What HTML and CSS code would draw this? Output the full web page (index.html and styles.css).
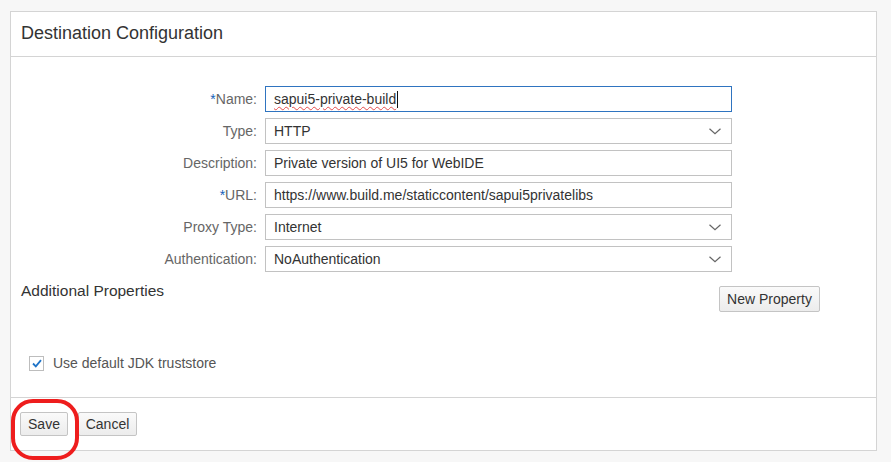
FILE: index.html
```html
<!DOCTYPE html>
<html>
<head>
<meta charset="utf-8">
<link rel="stylesheet" href="styles.css">
</head>
<body>
<div class="panel">
  <div class="panel-header">Destination Configuration</div>
  <div class="panel-body">
    <div class="form">
      <label class="lbl"><span class="req">*</span>Name:</label>
      <div class="field focused"><span class="spell">sapui5-private-build</span><span class="caret"></span></div>

      <label class="lbl">Type:</label>
      <div class="field select"><span>HTTP</span>
        <svg class="chev" width="12" height="7" viewBox="0 0 12 7"><polyline points="0.5,0.8 6,5.8 11.5,0.8" fill="none" stroke="#666" stroke-width="1.2"/></svg>
      </div>

      <label class="lbl">Description:</label>
      <div class="field"><span>Private version of UI5 for WebIDE</span></div>

      <label class="lbl"><span class="req">*</span>URL:</label>
      <div class="field"><span>https://www.build.me/staticcontent/sapui5privatelibs</span></div>

      <label class="lbl">Proxy Type:</label>
      <div class="field select"><span>Internet</span>
        <svg class="chev" width="12" height="7" viewBox="0 0 12 7"><polyline points="0.5,0.8 6,5.8 11.5,0.8" fill="none" stroke="#666" stroke-width="1.2"/></svg>
      </div>

      <label class="lbl">Authentication:</label>
      <div class="field select"><span>NoAuthentication</span>
        <svg class="chev" width="12" height="7" viewBox="0 0 12 7"><polyline points="0.5,0.8 6,5.8 11.5,0.8" fill="none" stroke="#666" stroke-width="1.2"/></svg>
      </div>
    </div>

    <div class="additional">
      <div class="add-title">Additional Properties</div>
      <button class="btn btn-new">New Property</button>
    </div>

    <div class="check-row">
      <span class="checkbox">
        <svg width="10" height="9" viewBox="0 0 10 9"><polyline points="1,4.5 3.8,7.3 9,1.2" fill="none" stroke="#1f74c8" stroke-width="1.8"/></svg>
      </span>
      <span class="check-label">Use default JDK truststore</span>
    </div>
  </div>
  <div class="panel-footer">
    <button class="btn btn-save">Save</button>
    <button class="btn btn-cancel">Cancel</button>
    <div class="highlight"></div>
  </div>
</div>
</body>
</html>
```

FILE: styles.css
```css
html, body {
  margin: 0;
  padding: 0;
}
body {
  background: #f7f7f7;
  font-family: "Liberation Sans", Arial, sans-serif;
  color: #333;
  width: 891px;
  height: 462px;
  overflow: hidden;
}
.panel {
  margin: 11px 0 0 10px;
  width: 865px;
  background: #fff;
  border: 1px solid #d4d4d4;
}
.panel-header {
  height: 45px;
  border-bottom: 1px solid #d4d4d4;
  display: flex;
  align-items: center;
  padding: 0 0 2px 10px;
  box-sizing: border-box;
  font-size: 18px;
  color: #333;
}
.panel-body {
  height: 340px;
  box-sizing: border-box;
  padding-top: 29px;
}
.form {
  display: grid;
  grid-template-columns: 246px 467px;
  column-gap: 8px;
  row-gap: 6px;
}
.lbl {
  font-size: 14px;
  color: #666;
  text-align: right;
  line-height: 26px;
  height: 26px;
}
.req {
  color: #1561b8;
}
.field {
  height: 26px;
  box-sizing: border-box;
  border: 1px solid #c2c2c2;
  padding: 0 10px 0 8px;
  font-size: 14px;
  color: #333;
  display: flex;
  align-items: center;
}
.field.focused {
  border-color: #2f74c0;
}
.spell {
  text-decoration: underline wavy #e54b4b;
  text-decoration-thickness: 1px;
  text-underline-offset: 2px;
}
.caret {
  width: 1px;
  height: 17px;
  background: #111;
  margin-left: 1px;
}
.field.select {
  justify-content: space-between;
}
.chev {
  display: block;
  margin-top: 1px;
}
.additional {
  display: flex;
  justify-content: space-between;
  align-items: flex-start;
  margin-top: 10px;
  padding: 0 56px 0 10px;
}
.add-title {
  font-size: 15.5px;
  line-height: 18px;
  color: #333;
}
.btn {
  font-family: "Liberation Sans", Arial, sans-serif;
  font-size: 14px;
  color: #333;
  background: linear-gradient(#fafafa, #ececec);
  border: 1px solid #c4c4c4;
  border-radius: 2px;
  padding: 0;
  margin: 0;
}
.btn-new {
  margin-top: 4px;
  width: 101px;
  height: 26px;
}
.check-row {
  display: flex;
  align-items: center;
  margin-top: 43px;
  padding-left: 18px;
}
.checkbox {
  width: 15px;
  height: 15px;
  box-sizing: border-box;
  border: 1px solid #bdbdbd;
  background: #fff;
  display: flex;
  align-items: center;
  justify-content: center;
}
.check-label {
  margin-left: 9px;
  font-size: 14px;
  color: #555;
}
.panel-footer {
  position: relative;
  height: 53px;
  border-top: 1px solid #d4d4d4;
  display: flex;
  align-items: flex-start;
  padding: 14px 0 0 9px;
  box-sizing: border-box;
}
.btn-save {
  width: 48px;
  height: 24px;
}
.btn-cancel {
  width: 59px;
  height: 24px;
  margin-left: 10px;
}
.highlight {
  position: absolute;
  left: 0;
  top: 1px;
  width: 68px;
  height: 61px;
  box-sizing: border-box;
  border: 4px solid #ee1d1d;
  border-radius: 22px;
  pointer-events: none;
}
```
